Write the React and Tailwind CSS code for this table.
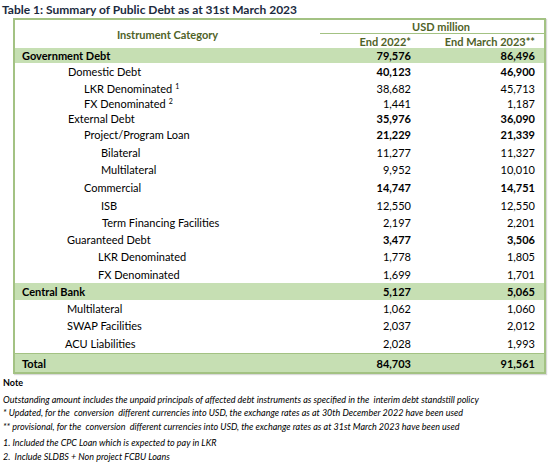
const rows = [
  { label: "Government Debt", a: "79,576", b: "86,496", pad: "pl-[7px]", group: true, h: "h-[15px]" },
  { label: "Domestic Debt", a: "40,123", b: "46,900", pad: "pl-[53px]", bold: true, h: "h-[17px]" },
  { label: "LKR Denominated", sup: "1", a: "38,682", b: "45,713", pad: "pl-[69px]", h: "h-[16px]" },
  { label: "FX Denominated", sup: "2", a: "1,441", b: "1,187", pad: "pl-[69px]", h: "h-[14px]" },
  { label: "External Debt", a: "35,976", b: "36,090", pad: "pl-[53px]", bold: true, h: "h-[16px]" },
  { label: "Project/Program Loan", a: "21,229", b: "21,339", pad: "pl-[69px]", bold: true, h: "h-[17px]" },
  { label: "Bilateral", a: "11,277", b: "11,327", pad: "pl-[86px]", h: "h-[18px]" },
  { label: "Multilateral", a: "9,952", b: "10,010", pad: "pl-[86px]", h: "h-[17px]" },
  { label: "Commercial", a: "14,747", b: "14,751", pad: "pl-[69px]", bold: true, h: "h-[18px]" },
  { label: "ISB", a: "12,550", b: "12,550", pad: "pl-[86px]", h: "h-[18px]" },
  { label: "Term Financing Facilities", a: "2,197", b: "2,201", pad: "pl-[87px]", h: "h-[17px]" },
  { label: "Guaranteed Debt", a: "3,477", b: "3,506", pad: "pl-[52px]", bold: true, h: "h-[17px]" },
  { label: "LKR Denominated", a: "1,778", b: "1,805", pad: "pl-[83px]", h: "h-[17px]" },
  { label: "FX Denominated", a: "1,699", b: "1,701", pad: "pl-[83px]", h: "h-[18px]" },
  { label: "Central Bank", a: "5,127", b: "5,065", pad: "pl-[7px]", group: true, h: "h-[17px]" },
  { label: "Multilateral", a: "1,062", b: "1,060", pad: "pl-[52px]", h: "h-[17px]" },
  { label: "SWAP Facilities", a: "2,037", b: "2,012", pad: "pl-[52px]", h: "h-[17px]" },
  { label: "ACU Liabilities", a: "2,028", b: "1,993", pad: "pl-[50px]", h: "h-[19px]" },
];

function Row({ r }) {
  const num = r.group || r.bold ? "font-bold" : "";
  return (
    <div className={`flex items-center ${r.h} ${r.group ? "bg-[#c6dfb3]" : ""}`}>
      <div className={`w-[305px] ${r.pad} ${r.group ? "font-bold" : ""}`}>
        {r.label}
        {r.sup && <sup className="ml-[3px] text-[7px]">{r.sup}</sup>}
      </div>
      <div className={`w-[97px] pr-[6px] text-right ${num}`}>{r.a}</div>
      <div className={`flex-1 pr-[9px] text-right ${num}`}>{r.b}</div>
    </div>
  );
}

export default function App() {
  return (
    <div className="w-[559px] h-[463px] bg-white text-black font-['Lato','Open_Sans',sans-serif] overflow-hidden">
      <div className="pl-[2px] pt-[2px] text-[12px] font-bold text-[#1b2a3e] leading-[16px]">
        Table 1: Summary of Public Debt as at 31st March 2023
      </div>
      <div className="ml-[13px] w-[533px] border-2 border-[#a3c283] text-[11px] leading-[13px] shadow-[1px_1px_1px_rgba(0,0,0,0.15)]">
        <div className="flex h-[28px] text-[#4f6228] font-bold">
          <div className="w-[305px] flex items-center justify-center">Instrument Category</div>
          <div className="flex-1 flex flex-col">
            <div className="h-[14px] flex items-center justify-center pl-[18px] border-b border-[#a3c283]">
              USD million
            </div>
            <div className="flex flex-1 items-center">
              <div className="w-[97px] pr-[6px] text-right">End 2022*</div>
              <div className="flex-1 pr-[9px] text-right">End March 2023**</div>
            </div>
          </div>
        </div>
        {rows.map((r, i) => (
          <Row key={i} r={r} />
        ))}
        <div className="flex items-center h-[19px] bg-[#c6dfb3] font-bold border-t border-[#a3c283]">
          <div className="w-[305px] pl-[7px]">Total</div>
          <div className="w-[97px] pr-[6px] text-right">84,703</div>
          <div className="flex-1 pr-[9px] text-right">91,561</div>
        </div>
      </div>
      <div className="pl-[3px] text-[9px] leading-[13.5px]">
        <div className="mt-[2px] font-bold">Note</div>
        <div className="mt-[3px] italic">
          Outstanding amount includes the unpaid principals of affected debt instruments as specified in the&nbsp; interim debt standstill policy
        </div>
        <div className="italic">
          * Updated, for the&nbsp; conversion&nbsp; different currencies into USD, the exchange rates as at 30th December 2022 have been used
        </div>
        <div className="italic">
          ** provisional, for the&nbsp; conversion&nbsp; different currencies into USD, the exchange rates as at 31st March 2023 have been used
        </div>
        <div className="mt-[3px] italic">1. Included the CPC Loan which is expected to pay in LKR</div>
        <div className="italic">2.&nbsp; Include SLDBS + Non project FCBU Loans</div>
      </div>
    </div>
  );
}
